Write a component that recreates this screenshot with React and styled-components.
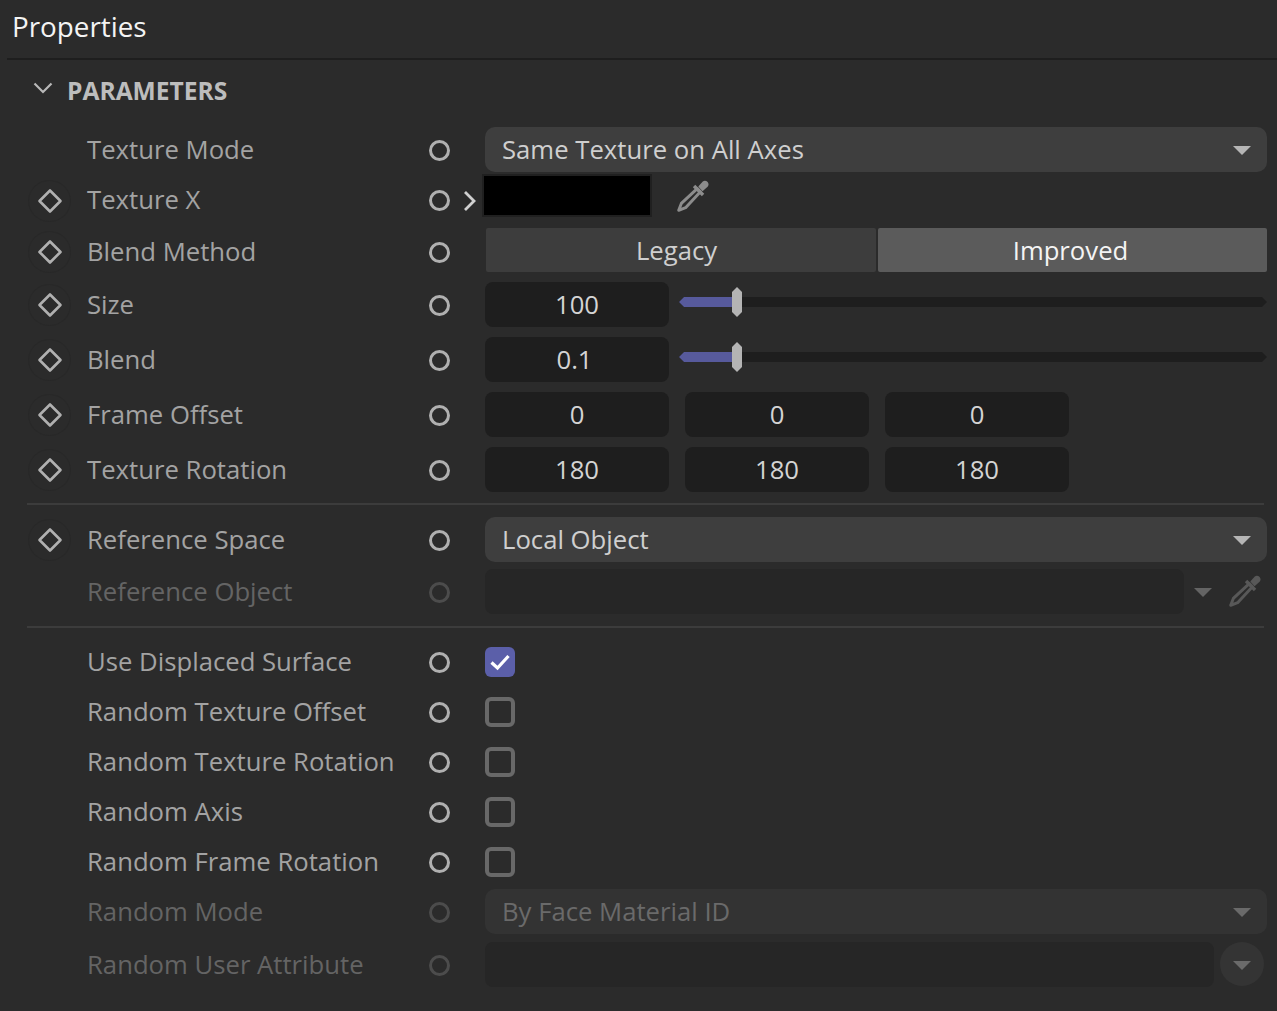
import React from 'react';
import styled, { createGlobalStyle } from 'styled-components';

const GlobalStyle = createGlobalStyle`
  html, body {
    margin: 0;
    padding: 0;
    background: #2b2b2b;
  }
  body {
    font-family: "Open Sans", "Noto Sans", sans-serif;
    overflow: hidden;
  }
`;

const Panel = styled.div`
  width: 1277px;
  height: 1011px;
  background: #2b2b2b;
  overflow: hidden;
`;

const TitleBar = styled.div`
  height: 60px;
  margin-left: 7px;
  padding-left: 5px;
  padding-bottom: 6px;
  display: flex;
  align-items: center;
  box-sizing: border-box;
  border-bottom: 2px solid #1e1e1e;
  font-size: 27.8px;
  color: #f4f4f4;
`;

const SectionHead = styled.div`
  height: 65px;
  box-sizing: border-box;
  padding: 0 0 5px 33px;
  display: flex;
  align-items: center;
  gap: 14px;
  font-size: 24.6px;
  font-weight: 700;
  color: #bdbdbd;

  svg {
    margin-top: -4px;
  }
`;

const Row = styled.div`
  height: ${p => p.$h}px;
  display: flex;
  align-items: center;
  padding-left: 28px;
  padding-right: 10px;
`;

const KeyCell = styled.div`
  width: 43px;
  height: 42px;
  margin-right: 16px;
  display: flex;
  align-items: center;
  justify-content: center;
  flex: none;
  border-radius: 50%;
  border: ${p => (p.$on ? '1px solid #282828' : '1px solid transparent')};
  box-sizing: border-box;
`;

const Label = styled.div`
  width: 342px;
  flex: none;
  padding-bottom: 2px;
  box-sizing: border-box;
  font-size: 25.7px;
  white-space: nowrap;
  color: ${p => (p.$off ? '#646464' : '#a3a3a3')};
`;

const Anim = styled.div`
  width: 21px;
  height: 21px;
  flex: none;
  box-sizing: border-box;
  border-radius: 50%;
  border: 3px solid ${p => (p.$off ? '#4c4c4c' : '#b0b0b0')};
`;

const Slot = styled.div`
  width: 35px;
  flex: none;
  display: flex;
  align-items: center;
  padding-left: 13px;
  box-sizing: border-box;
`;

const Control = styled.div`
  flex: 1;
  min-width: 0;
  margin-bottom: 2px;
  display: flex;
  align-items: center;
`;

const Dropdown = styled.div`
  flex: 1;
  height: 45px;
  box-sizing: border-box;
  border-radius: 10px;
  background: ${p => (p.$off ? '#333333' : '#3e3e3e')};
  color: ${p => (p.$off ? '#6a6a6a' : '#cfcfcf')};
  font-size: 25.7px;
  display: flex;
  align-items: center;
  justify-content: space-between;
  padding: 0 16px 0 17px;
`;

const Arrow = styled.span`
  width: 0;
  height: 0;
  border-left: 9.5px solid transparent;
  border-right: 9.5px solid transparent;
  border-top: 9px solid ${p => p.$c || '#b5b5b5'};
  margin-top: 2px;
  flex: none;
`;

const Swatch = styled.div`
  width: 170px;
  height: 43px;
  box-sizing: border-box;
  margin: -9px 0 0 -3px;
  background: #000;
  border: 2px solid #202020;
`;

const PickerWrap = styled.div`
  margin-left: ${p => p.$left}px;
  margin-top: ${p => p.$top || 0}px;
  display: flex;
  align-items: center;
`;

const Segments = styled.div`
  flex: 1;
  display: flex;
  gap: 2px;
  margin: -2px 0 0 1px;
`;

const Segment = styled.div`
  flex: ${p => (p.$active ? '1' : '0 0 390px')};
  height: 44px;
  box-sizing: border-box;
  display: flex;
  align-items: center;
  justify-content: center;
  font-size: 25.7px;
  background: ${p => (p.$active ? '#5b5b5b' : '#3d3d3d')};
  color: ${p => (p.$active ? '#f4f4f4' : '#cfcfcf')};
  padding-right: ${p => (p.$active ? 4 : 9)}px;
  border-radius: 2px;
`;

const NumberField = styled.div`
  width: 184px;
  height: 45px;
  flex: none;
  border-radius: 8px;
  background: #1e1e1e;
  color: #d4d4d4;
  font-size: 25.7px;
  display: flex;
  align-items: center;
  justify-content: center;
  padding-right: ${p => p.$shift || 0}px;
  box-sizing: border-box;
`;

const Triple = styled.div`
  display: flex;
  gap: 16px;
`;

const Slider = styled.div`
  position: relative;
  flex: 1;
  height: 10px;
  margin-left: 10px;
  margin-top: -4px;
`;

const Track = styled.div`
  height: 10px;
  display: flex;
  background: #1e1e1e;
  clip-path: polygon(5px 0, calc(100% - 5px) 0, 100% 50%, calc(100% - 5px) 100%, 5px 100%, 0 50%);
`;

const Fill = styled.div`
  background: #575a9c;
`;

const Thumb = styled.div`
  position: absolute;
  top: -10px;
  width: 10px;
  height: 30px;
  margin-left: -5px;
  background: #b4b4b4;
  clip-path: polygon(50% 0, 100% 5px, 100% calc(100% - 5px), 50% 100%, 0 calc(100% - 5px), 0 5px);
`;

const DarkField = styled.div`
  height: 45px;
  width: ${p => p.$w}px;
  flex: none;
  border-radius: 8px;
  background: #262626;
`;

const SideArrow = styled.div`
  width: 38px;
  flex: none;
  display: flex;
  justify-content: center;
`;

const RoundButton = styled.div`
  width: 44px;
  height: 44px;
  margin-left: 6px;
  flex: none;
  border-radius: 50%;
  background: #343434;
  display: flex;
  align-items: center;
  justify-content: center;
`;

const Box = styled.div`
  width: 30px;
  height: 30px;
  margin-top: 2px;
  box-sizing: border-box;
  border-radius: 6px;
  display: flex;
  align-items: center;
  justify-content: center;
  background: ${p => (p.$checked ? '#5b5fa9' : 'transparent')};
  border: ${p => (p.$checked ? 'none' : '4px solid #686868')};
`;

const Divider = styled.div`
  height: 2px;
  margin: ${p => p.$top}px 13px ${p => p.$bottom}px 27px;
  background: #3c3c3c;
`;

const Diamond = () => (
  <svg width="26" height="26" viewBox="0 0 26 26" fill="none">
    <path d="M13 2.5 23.5 13 13 23.5 2.5 13Z" stroke="#b0b0b0" strokeWidth="2.6" strokeLinejoin="round" />
  </svg>
);

const ChevronRight = () => (
  <svg width="13" height="22" viewBox="0 0 13 22" fill="none">
    <path d="M2 2 11 11 2 20" stroke="#d0d0d0" strokeWidth="2.8" />
  </svg>
);

const ChevronDown = () => (
  <svg width="20" height="12" viewBox="0 0 20 12" fill="none">
    <path d="M1.5 1.5 10 10 18.5 1.5" stroke="#b8b8b8" strokeWidth="2.2" />
  </svg>
);

const Dropper = ({ color }) => (
  <svg width="36" height="36" viewBox="0 0 34 34" fill="none">
    <path d="M21 10 24 13 10 28 3.5 30.5 6 24Z" stroke={color} strokeWidth="2.8" strokeLinejoin="round" />
    <path d="M18 7.5 26.5 16" stroke={color} strokeWidth="3.2" />
    <path d="M22 8 26 3.5C27.5 2.3 29.5 2.5 30.8 3.8 32 5.2 32 7 30.8 8.2L26 12.5Z" fill={color} />
  </svg>
);

const Check = () => (
  <svg width="22" height="18" viewBox="0 0 22 18" fill="none">
    <path d="M2.5 9.5 8.5 15 19.5 3" stroke="#fff" strokeWidth="3.2" />
  </svg>
);

const Param = ({ h, label, keyed, off, slot, children }) => (
  <Row $h={h}>
    <KeyCell $on={keyed}>{keyed && <Diamond />}</KeyCell>
    <Label $off={off}>{label}</Label>
    <Anim $off={off} />
    <Slot>{slot}</Slot>
    <Control>{children}</Control>
  </Row>
);

const SliderControl = ({ value, shift }) => (
  <>
    <NumberField $shift={shift}>{value}</NumberField>
    <Slider>
      <Track>
        <Fill style={{ width: '58px' }} />
      </Track>
      <Thumb style={{ left: '58px' }} />
    </Slider>
  </>
);

const App = () => (
  <Panel>
    <GlobalStyle />
    <TitleBar>Properties</TitleBar>
    <SectionHead>
      <ChevronDown />
      PARAMETERS
    </SectionHead>

    <Param h={50} label="Texture Mode">
      <Dropdown>Same Texture on All Axes<Arrow /></Dropdown>
    </Param>
    <Param h={51} label="Texture X" keyed slot={<ChevronRight />}>
      <Swatch />
      <PickerWrap $left={23} $top={-7}><Dropper color="#8c8c8c" /></PickerWrap>
    </Param>
    <Param h={52} label="Blend Method" keyed>
      <Segments>
        <Segment>Legacy</Segment>
        <Segment $active>Improved</Segment>
      </Segments>
    </Param>
    <Param h={54} label="Size" keyed>
      <SliderControl value="100" />
    </Param>
    <Param h={56} label="Blend" keyed>
      <SliderControl value="0.1" shift={5} />
    </Param>
    <Param h={54} label="Frame Offset" keyed>
      <Triple>
        <NumberField>0</NumberField>
        <NumberField>0</NumberField>
        <NumberField>0</NumberField>
      </Triple>
    </Param>
    <Param h={56} label="Texture Rotation" keyed>
      <Triple>
        <NumberField>180</NumberField>
        <NumberField>180</NumberField>
        <NumberField>180</NumberField>
      </Triple>
    </Param>

    <Divider $top={5} $bottom={7} />

    <Param h={56} label="Reference Space" keyed>
      <Dropdown>Local Object<Arrow /></Dropdown>
    </Param>
    <Param h={48} label="Reference Object" off>
      <DarkField $w={699} />
      <SideArrow><Arrow $c="#646464" /></SideArrow>
      <PickerWrap $left={5}><Dropper color="#585858" /></PickerWrap>
    </Param>

    <Divider $top={10} $bottom={9} />

    <Param h={50} label="Use Displaced Surface">
      <Box $checked><Check /></Box>
    </Param>
    <Param h={50} label="Random Texture Offset"><Box /></Param>
    <Param h={50} label="Random Texture Rotation"><Box /></Param>
    <Param h={50} label="Random Axis"><Box /></Param>
    <Param h={50} label="Random Frame Rotation"><Box /></Param>
    <Param h={50} label="Random Mode" off>
      <Dropdown $off>By Face Material ID<Arrow $c="#6a6a6a" /></Dropdown>
    </Param>
    <Param h={56} label="Random User Attribute" off>
      <DarkField $w={729} />
      <RoundButton><Arrow $c="#6a6a6a" /></RoundButton>
    </Param>
  </Panel>
);

export default App;
